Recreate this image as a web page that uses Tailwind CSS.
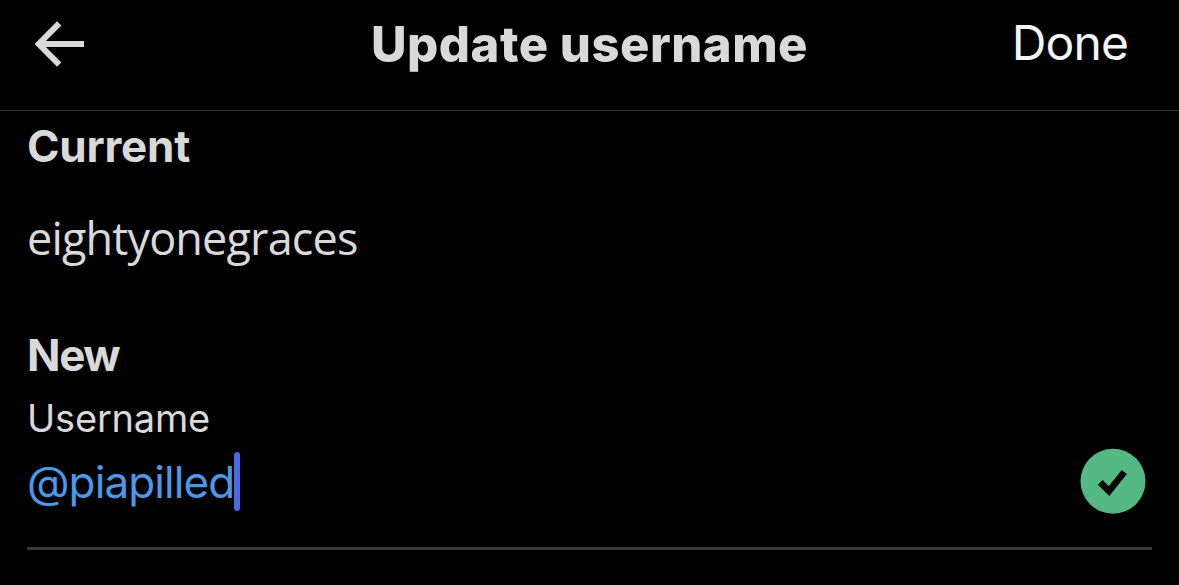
<!DOCTYPE html>
<html lang="en">
<head>
<meta charset="utf-8">
<title>Update username</title>
<script src="https://cdn.jsdelivr.net/npm/@tailwindcss/browser@4"></script>
</head>
<body class="h-[585px] overflow-hidden bg-black font-['Inter',sans-serif] text-[#d9d9d9]">
<header class="grid h-[111px] grid-cols-[1fr_auto_1fr] border-b border-[#343434] px-[35px] pb-[22px]">
  <button class="flex h-[88px] items-center justify-self-start" aria-label="Back">
    <svg class="h-[46px] w-[49px]" viewBox="0 0 49 46" fill="none" stroke="currentColor" stroke-width="6"><path d="M24.2 2.3 3.8 23 24.2 43.7M4 23H49"/></svg>
  </button>
  <h1 class="text-[49px] leading-[89px] font-extrabold tracking-[0.5px] whitespace-nowrap"><span>Update username</span></h1>
  <button class="mr-[16px] h-[86px] justify-self-end text-[48px] leading-[86px] tracking-[-0.9px] text-[#f2f4f5]"><span>Done</span></button>
</header>
<main class="flex flex-col pr-[27px] pl-[27px]">
  <h2 class="h-[70px] text-[44px] leading-[70px] font-bold tracking-[-0.25px]"><span>Current</span></h2>
  <p class="mt-[17px] h-[80px] font-['Open_Sans',sans-serif] text-[45px] leading-[80px] tracking-[-0.85px]"><span>eightyonegraces</span></p>
  <h2 class="mt-[52px] h-[51px] text-[44px] leading-[51px] font-bold tracking-[-1.4px]"><span>New</span></h2>
  <label class="mt-[12px] h-[50px] text-[38px] leading-[50px] tracking-[-0.2px]"><span>Username</span></label>
  <div class="flex h-[107px] items-start justify-between border-b-3 border-[#38393b] pt-[5px] pr-[6px]">
    <div class="mt-px flex h-[66px] items-center text-[44px] leading-[66px] tracking-[-0.9px] text-[#4a99e9]"><span>@piapilled</span><i class="mt-[-1px] h-[59px] w-[6px] rounded-full bg-[#4e68e4]"></i></div>
    <svg class="h-[66px] w-[66px]" viewBox="0 0 66 66"><circle cx="33" cy="33.3" r="32.5" fill="#54b882"/><path d="M20.2 34.4 29 43 44.3 24" fill="none" stroke="#000" stroke-width="6.6"/></svg>
  </div>
</main>
</body>
</html>
